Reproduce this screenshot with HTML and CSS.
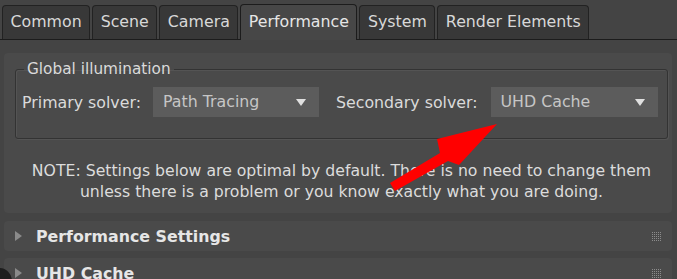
FILE: index.html
```html
<!DOCTYPE html>
<html lang="en">
<head>
    <meta charset="UTF-8">
    <title>Render Setup - Performance</title>
    <link rel="stylesheet" href="styles.css">
</head>
<body>

    <div class="tabs">
        <div class="tab">Common</div>
        <div class="tab">Scene</div>
        <div class="tab">Camera</div>
        <div class="tab active">Performance</div>
        <div class="tab">System</div>
        <div class="tab">Render Elements</div>
    </div>

    <div class="panel">
        <fieldset class="group">
            <legend>Global illumination</legend>
            <div class="solver-row">
                <span class="label">Primary solver:</span>
                <div class="dropdown primary">Path Tracing<span class="caret"></span></div>
                <span class="label second">Secondary solver:</span>
                <div class="dropdown secondary">UHD Cache<span class="caret"></span></div>
            </div>
        </fieldset>
        <p class="note">NOTE: Settings below are optimal by default. There is no need to change them<br>unless there is a problem or you know exactly what you are doing.</p>
    </div>

    <div class="rollout">
        <span class="arrow"></span>
        <span class="title">Performance Settings</span>
        <span class="grip"></span>
    </div>
    <div class="rollout">
        <span class="arrow"></span>
        <span class="title">UHD Cache</span>
        <span class="grip"></span>
    </div>

    <!-- red callout arrow over the note -->
    <svg class="callout" width="677" height="279" viewBox="0 0 677 279">
        <polygon points="390,183 440,153 437,139 497,124 459,165 448,161 395,191" fill="#ff0000"/>
    </svg>
    <div class="cursor-blob"></div>

</body>
</html>
```

FILE: styles.css
```css
* {
    margin: 0;
    padding: 0;
    box-sizing: border-box;
}

body {
    font-family: 'DejaVu Sans', sans-serif;
    font-size: 15.5px;
    background: #444444;
    color: #dcdcdc;
    width: 677px;
    height: 279px;
    overflow: hidden;
    position: relative;
}

.tabs {
    display: flex;
    align-items: flex-end;
    height: 40px;
    padding-left: 2px;
    border-bottom: 1px solid #1c1c1c;
}

.tab {
    height: 34px;
    padding: 0 7.5px;
    margin-right: 2px;
    line-height: 32px;
    font-size: 15.8px;
    background: #383838;
    border: 1px solid #222222;
    border-bottom: none;
    border-radius: 4px 4px 0 0;
    color: #d8d8d8;
}

.tab.active {
    height: 36px;
    line-height: 34px;
    background: #474747;
    margin-bottom: -1px;
    border-color: #1c1c1c;
    color: #e6e6e6;
}

.panel {
    margin: 13px 5px 0 4px;
    height: 160px;
    background: #4a4a4a;
    border-radius: 4px;
    padding: 7px 4px 0 11px;
}

.group {
    border: 1px solid #333333;
    border-radius: 3px;
    height: 79px;
    padding: 0 0 0 6px;
    box-shadow: inset 1px 1px 0 #545454, 1px 1px 0 #545454;
}

.group legend {
    margin-left: 2px;
    padding: 0 3px;
    font-size: 15.3px;
    color: #dadada;
}

.solver-row {
    display: flex;
    align-items: center;
    margin-top: 9px;
}

.label {
    font-size: 15.8px;
    color: #dadada;
}

.label.second {
    margin-left: 17px;
}

.dropdown {
    position: relative;
    height: 30px;
    line-height: 30px;
    padding-left: 10px;
    background: #5c5c5c;
    color: #c6c6c6;
    font-size: 15.8px;
}

.dropdown.primary {
    width: 166px;
    margin-left: 12px;
}

.dropdown.secondary {
    width: 167px;
    margin-left: 13px;
}

.caret {
    position: absolute;
    right: 13px;
    top: 12px;
    border-left: 5px solid transparent;
    border-right: 5px solid transparent;
    border-top: 7px solid #e0e0e0;
}

.note {
    margin-top: 21px;
    text-align: center;
    font-size: 15.7px;
    line-height: 21px;
    color: #dcdcdc;
}

.rollout {
    display: flex;
    align-items: center;
    margin: 8px 5px 0 4px;
    height: 30px;
    background: #4a4a4a;
    border-radius: 4px;
    padding: 0 11px;
}

.rollout + .rollout {
    margin-top: 7px;
}

.arrow {
    border-top: 5px solid transparent;
    border-bottom: 5px solid transparent;
    border-left: 7px solid #8a8a8a;
}

.title {
    margin-left: 14px;
    font-weight: bold;
    font-size: 15.8px;
    color: #e6e6e6;
    flex: 1;
}

.grip {
    width: 10px;
    height: 10px;
    background:
        linear-gradient(90deg, #4a4a4a 50%, transparent 50%) 0 0 / 2px 2px,
        linear-gradient(#4a4a4a 50%, #8c8c8c 50%) 0 0 / 2px 2px;
}

.callout {
    position: absolute;
    left: 0;
    top: 0;
    pointer-events: none;
}

.cursor-blob {
    position: absolute;
    left: -14px;
    top: 268px;
    width: 26px;
    height: 26px;
    border-radius: 50%;
    background: #1e1e1e;
}
```
